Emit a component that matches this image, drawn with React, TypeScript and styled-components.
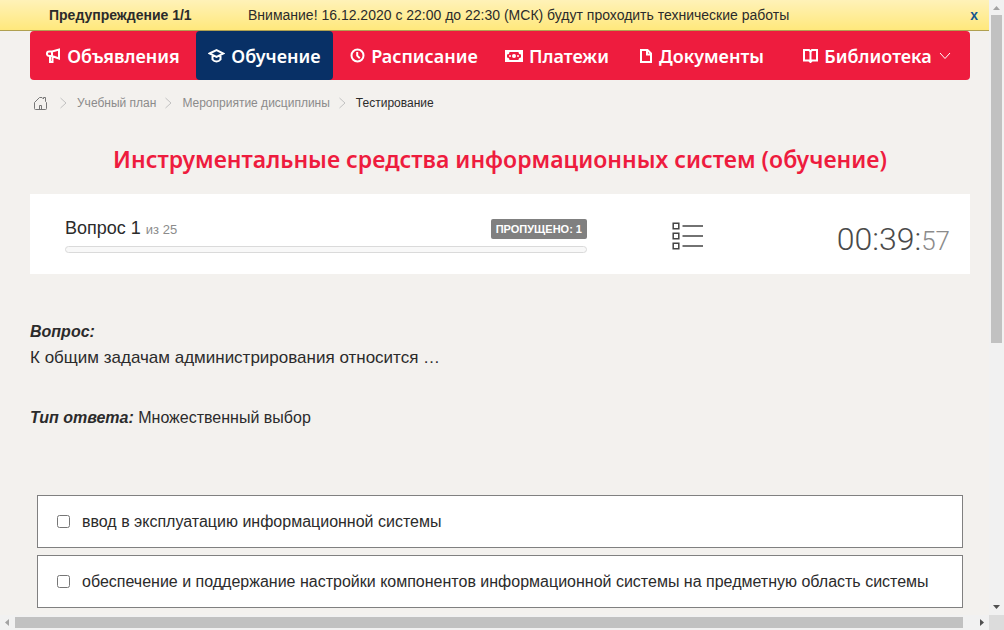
import React from "react";
import styled, { createGlobalStyle } from "styled-components";

const GlobalStyle = createGlobalStyle`
  *, *::before, *::after { box-sizing: border-box; }
  body {
    margin: 0;
    background: #f3f1ee;
    color: #2b2b2b;
    font-family: "Liberation Sans", Arial, sans-serif;
    font-size: 16px;
    overflow: hidden;
  }
`;

const display = `"Noto Sans", "Open Sans", sans-serif`;

const Viewport = styled.div`
  display: grid;
  grid-template-columns: minmax(0, 1fr) 15px;
  grid-template-rows: minmax(0, 1fr) 15px;
  height: 100vh;
`;

const Page = styled.div`
  overflow: hidden;
`;

const Notice = styled.div`
  display: flex;
  align-items: center;
  height: 31px;
  padding: 0 9px 0 49px;
  font-size: 14px;
  line-height: 16px;
  background: linear-gradient(#fff2b8, #ffe87c);
  border-bottom: 1px solid #b0a050;
`;

const NoticeTitle = styled.strong`
  flex: 0 0 199px;
`;

const NoticeText = styled.span`
  flex: 1;
`;

const CloseButton = styled.button`
  padding: 0 2px;
  border: 0;
  background: none;
  color: #14568f;
  font: bold 14px/16px "Liberation Sans", Arial, sans-serif;
  cursor: pointer;
`;

const Content = styled.div`
  padding: 0 19px 0 30px;
`;

const Nav = styled.nav`
  display: grid;
  grid-template-columns: 166fr 137fr 162fr 124fr 166fr 185fr;
  height: 49px;
  border-radius: 4px;
  background: #ee1c3e;
`;

const NavLink = styled.a<{ $active?: boolean }>`
  display: flex;
  align-items: center;
  justify-content: center;
  gap: 6px;
  border-radius: 4px;
  background: ${(p) => (p.$active ? "#083066" : "transparent")};
  color: #fff;
  font-family: ${display};
  font-size: 18px;
  font-weight: 600;
  line-height: 24px;
  text-decoration: none;
  white-space: nowrap;

  svg { flex: none; }
`;

const Breadcrumbs = styled.nav`
  display: flex;
  align-items: center;
  gap: 8px;
  padding: 15px 0 0 4px;
  font-size: 12px;
  line-height: 16px;

  svg { flex: none; }
`;

const Home = styled.a`
  display: flex;
  margin-right: 4px;
  color: #777;
`;

const Crumb = styled.a`
  color: #8b8b8b;
  text-decoration: none;
`;

const Current = styled.span`
  color: #2b2b2b;
`;

const Title = styled.h1`
  margin: 32px 0 19px;
  color: #ee1c3e;
  font-family: ${display};
  font-size: 23px;
  font-weight: 600;
  line-height: 32px;
  text-align: center;
  white-space: nowrap;
`;

const Status = styled.section`
  display: grid;
  grid-template-columns: 557fr 200fr 183fr;
  height: 80px;
  background: #fff;
`;

const Progress = styled.div`
  padding: 25px 0 0 35px;
`;

const ProgressHead = styled.div`
  display: flex;
  align-items: center;
  justify-content: space-between;
  height: 20px;
  margin-bottom: 7px;
  font-size: 18px;
  line-height: 22px;
`;

const Total = styled.small`
  color: #8b8b8b;
  font-size: 13px;
`;

const Badge = styled.span`
  padding: 0 5px;
  border-radius: 2px;
  background: #808080;
  color: #fff;
  font-size: 11px;
  font-weight: bold;
  line-height: 20px;
`;

const Track = styled.div`
  height: 7px;
  border: 1px solid #dadada;
  border-radius: 4px;
  background: #f8f8f8;
`;

const ListButton = styled.button`
  display: flex;
  align-items: center;
  justify-content: center;
  padding: 4px 0 0 2px;
  border: 0;
  background: none;
  color: #444;
  cursor: pointer;
`;

const Timer = styled.div`
  padding: 25px 20px 0 0;
  color: #4a4a4a;
  font-family: Roboto, sans-serif;
  font-size: 32px;
  font-weight: 300;
  line-height: 40px;
  text-align: right;
  white-space: nowrap;
`;

const Seconds = styled.span`
  color: #8b8b8b;
  font-size: 26px;
`;

const Question = styled.section`
  padding-top: 45px;
  line-height: 26px;
`;

const Paragraph = styled.p`
  margin: 0;
`;

const QuestionText = styled(Paragraph)`
  margin-bottom: 34px;
  font-size: 17px;
`;

const Label = styled.strong`
  font-style: italic;
`;

const Answers = styled.form`
  display: flex;
  flex-direction: column;
  gap: 7px;
  padding: 64px 7px 0;
`;

const Answer = styled.label`
  display: flex;
  align-items: center;
  gap: 12px;
  height: 53px;
  padding: 0 19px;
  border: 1px solid #808080;
  background: #fff;
  white-space: nowrap;
`;

const Checkbox = styled.input`
  flex: none;
  width: 13px;
  height: 13px;
  margin: 0;
`;

const ScrollTrack = styled.div<{ $vertical?: boolean }>`
  display: flex;
  flex-direction: ${(p) => (p.$vertical ? "column" : "row")};
  align-items: stretch;
  background: #f1f1f1;
`;

const ScrollArrow = styled.span`
  display: flex;
  flex: none;
  align-items: center;
  justify-content: center;
  width: 15px;
  height: 15px;
`;

const ScrollThumb = styled.span<{ $vertical?: boolean; $size: number }>`
  flex: ${(p) => p.$size} 0 0;
  margin: ${(p) => (p.$vertical ? "0 2px" : "2px 0")};
  background: #c1c1c1;
`;

const ScrollRest = styled.span<{ $size: number }>`
  flex: ${(p) => p.$size} 0 0;
`;

const ScrollCorner = styled.div`
  background: #dcdcdc;
`;

const icons = {
  horn: (
    <svg width="15" height="15" viewBox="0 0 15 15" fill="none" stroke="#fff" strokeWidth="2">
      <path d="M6 3.5H3.2A2.1 2.1 0 0 0 3.2 8H6L13 10.5V1.5L6 3.5V8M4 8V14H6.5V8" />
    </svg>
  ),
  cap: (
    <svg width="17" height="15" viewBox="0 0 17 15" fill="none" stroke="#fff" strokeWidth="2">
      <path d="M1.5 5.5 8.5 2 15.5 5.5 8.5 9ZM4.5 7V11.5Q6 13.5 8.5 13.5T12.5 11.5V7" />
    </svg>
  ),
  clock: (
    <svg width="15" height="15" viewBox="0 0 15 15" fill="none" stroke="#fff" strokeWidth="2">
      <circle cx="7.5" cy="7.5" r="6" />
      <path d="M7.2 4V7.6L9.8 10.2" />
    </svg>
  ),
  money: (
    <svg width="18" height="12" viewBox="0 0 18 12">
      <path
        fill="#fff"
        fillRule="evenodd"
        d="M0 0H18V12H0ZM4.5 2A2.5 2.5 0 0 1 2 4.5V7.5A2.5 2.5 0 0 1 4.5 10H13.5A2.5 2.5 0 0 1 16 7.5V4.5A2.5 2.5 0 0 1 13.5 2Z"
      />
      <circle cx="9" cy="6" r="2" fill="#fff" />
      <circle cx="5" cy="6" r="1" fill="#fff" />
      <circle cx="13" cy="6" r="1" fill="#fff" />
    </svg>
  ),
  file: (
    <svg width="13" height="14" viewBox="0 0 13 14" fill="none" stroke="#fff" strokeWidth="2">
      <path d="M1 1H7.5L11 4.5V13H1ZM7 1V5.5H11" />
    </svg>
  ),
  book: (
    <svg width="15" height="14" viewBox="0 0 15 14" fill="none" stroke="#fff" strokeWidth="2">
      <path d="M7.5 2.5 6 1H1V11.5H6L7.5 13 9 11.5H14V1H9L7.5 2.5V12.5" />
    </svg>
  ),
};

const navItems = [
  { label: "Объявления", icon: icons.horn },
  { label: "Обучение", icon: icons.cap, active: true },
  { label: "Расписание", icon: icons.clock },
  { label: "Платежи", icon: icons.money },
  { label: "Документы", icon: icons.file },
  { label: "Библиотека", icon: icons.book, menu: true },
];

const answers = [
  "ввод в эксплуатацию информационной системы",
  "обеспечение и поддержание настройки компонентов информационной системы на предметную область системы",
];

const Separator = () => (
  <svg width="10" height="12" viewBox="0 0 10 12" fill="none" stroke="#c2c2c2" aria-hidden="true">
    <path d="M1.5 1 7 6 1.5 11" />
  </svg>
);

const Arrow = ({ d, color }: { d: string; color: string }) => (
  <ScrollArrow>
    <svg width="15" height="15" viewBox="0 0 15 15" aria-hidden="true">
      <path d={d} fill={color} />
    </svg>
  </ScrollArrow>
);

export default function App() {
  return (
    <>
      <GlobalStyle />
      <Viewport>
        <Page>
          <Notice role="status">
            <NoticeTitle>Предупреждение 1/1</NoticeTitle>
            <NoticeText>
              Внимание! 16.12.2020 с 22:00 до 22:30 (МСК) будут проходить технические работы
            </NoticeText>
            <CloseButton type="button">x</CloseButton>
          </Notice>
          <Content>
            <Nav>
              {navItems.map((item) => (
                <NavLink key={item.label} href="#" $active={item.active}>
                  {item.icon}
                  {item.label}
                  {item.menu && (
                    <svg width="14" height="8" viewBox="0 0 14 8" fill="none" stroke="#fff">
                      <path d="M2 1 7 6.5 12 1" />
                    </svg>
                  )}
                </NavLink>
              ))}
            </Nav>
            <Breadcrumbs>
              <Home href="#" aria-label="Главная">
                <svg width="13" height="13" viewBox="0 0 13 13" fill="none" stroke="currentColor">
                  <path d="M.5 5.5V11.5Q.5 12.5 1.5 12.5H11.5Q12.5 12.5 12.5 11.5V5.5L11.5 4.5V.5H9.5V2L8 .5H5.5L.5 5.5M5.5 12.5V8.5H7.5V12.5" />
                </svg>
              </Home>
              <Separator />
              <Crumb href="#">Учебный план</Crumb>
              <Separator />
              <Crumb href="#">Мероприятие дисциплины</Crumb>
              <Separator />
              <Current>Тестирование</Current>
            </Breadcrumbs>
            <Title>Инструментальные средства информационных систем (обучение)</Title>
            <Status>
              <Progress>
                <ProgressHead>
                  <span>
                    Вопрос 1 <Total>из 25</Total>
                  </span>
                  <Badge>ПРОПУЩЕНО: 1</Badge>
                </ProgressHead>
                <Track />
              </Progress>
              <ListButton type="button" aria-label="Список вопросов">
                <svg width="32" height="28" viewBox="0 0 32 28" fill="none" stroke="currentColor" strokeWidth="1.5">
                  <path d="M1.2 1.2H6.8V6.8H1.2ZM1.2 11.2H6.8V16.8H1.2ZM1.2 21.2H6.8V26.8H1.2ZM10.5 4H31M10.5 14H31M10.5 24H31" />
                </svg>
              </ListButton>
              <Timer>
                00:39:<Seconds>57</Seconds>
              </Timer>
            </Status>
            <Question>
              <Paragraph>
                <Label>Вопрос:</Label>
              </Paragraph>
              <QuestionText>К общим задачам администрирования относится …</QuestionText>
              <Paragraph>
                <Label>Тип ответа:</Label> Множественный выбор
              </Paragraph>
            </Question>
            <Answers>
              {answers.map((text) => (
                <Answer key={text}>
                  <Checkbox type="checkbox" />
                  {text}
                </Answer>
              ))}
            </Answers>
          </Content>
        </Page>
        <ScrollTrack $vertical>
          <Arrow d="M4 10 7.5 6 11 10Z" color="#a3a3a3" />
          <ScrollThumb $vertical $size={328} />
          <ScrollRest $size={257} />
          <Arrow d="M4 5 7.5 9 11 5Z" color="#505050" />
        </ScrollTrack>
        <ScrollTrack>
          <Arrow d="M9 4 5 7.5 9 11Z" color="#a3a3a3" />
          <ScrollThumb $size={948} />
          <ScrollRest $size={11} />
          <Arrow d="M6 4 10 7.5 6 11Z" color="#505050" />
        </ScrollTrack>
        <ScrollCorner />
      </Viewport>
    </>
  );
}
